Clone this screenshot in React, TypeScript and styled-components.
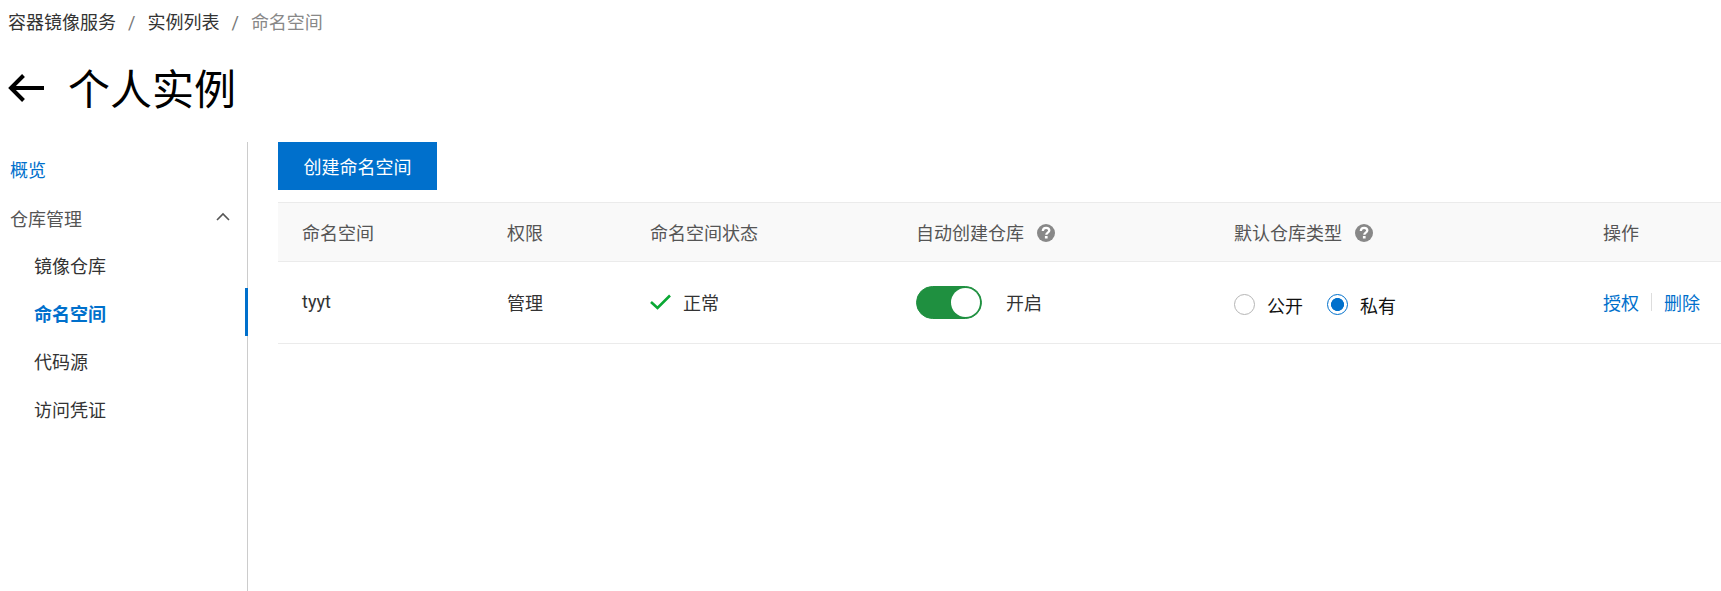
import React from "react";
import styled, {createGlobalStyle} from 'styled-components'

const GlobalStyle = createGlobalStyle`
    html, body {
        margin: 0;
        padding: 0;
        background: #fff;
        font-family: "Roboto", "Noto Sans CJK SC", sans-serif;
        font-size: 18px;
        color: #333;
    }
`;

const columns = "205px 143px 266px 318px 369px 142px";

const HelpIcon = () => <Help viewBox="0 0 18 18" aria-hidden="true">
    <circle cx="9" cy="9" r="9" fill="#888" />
    <path d="M5.8 7C5.9 4.9 7.3 3.8 9.1 3.8C11 3.8 12.3 5 12.3 6.5C12.3 8.7 9.3 8.6 9.3 10.8" fill="none" stroke="#fff" strokeWidth="2.3" />
    <rect x="7.9" y="12" width="2.7" height="2.5" fill="#fff" />
</Help>

export default function App() {
    return <Page>
        <GlobalStyle />
        <Breadcrumb>
            <span>容器镜像服务</span>
            <Slash>/</Slash>
            <span>实例列表</span>
            <Slash>/</Slash>
            <Current>命名空间</Current>
        </Breadcrumb>
        <TitleRow>
            <BackArrow width="36" height="30" viewBox="0 0 36 30" aria-hidden="true">
                <path d="M36 15H3M15.5 2.5L3 15L15.5 27.5" fill="none" stroke="#000" strokeWidth="4" />
            </BackArrow>
            <Title>个人实例</Title>
        </TitleRow>
        <Main>
            <Sidebar>
                <TopItem $active>概览</TopItem>
                <GroupItem>
                    仓库管理
                    <svg width="14" height="9" viewBox="0 0 14 9" aria-hidden="true">
                        <path d="M1 8L7 2L13 8" fill="none" stroke="#555" strokeWidth="1.6" />
                    </svg>
                </GroupItem>
                <SubItem>镜像仓库</SubItem>
                <SubItem $active>命名空间</SubItem>
                <SubItem>代码源</SubItem>
                <SubItem>访问凭证</SubItem>
            </Sidebar>
            <Content>
                <PrimaryButton>创建命名空间</PrimaryButton>
                <HeaderRow>
                    <Cell>命名空间</Cell>
                    <Cell>权限</Cell>
                    <Cell>命名空间状态</Cell>
                    <Cell>自动创建仓库<HelpIcon /></Cell>
                    <Cell>默认仓库类型<HelpIcon /></Cell>
                    <Cell>操作</Cell>
                </HeaderRow>
                <BodyRow>
                    <BodyCell>tyyt</BodyCell>
                    <BodyCell>管理</BodyCell>
                    <BodyCell>
                        <svg width="21" height="16" viewBox="0 0 21 16" aria-hidden="true">
                            <path d="M1 8L7.5 14L20 1.5" fill="none" stroke="#0aa834" strokeWidth="2.6" />
                        </svg>
                        <StatusText>正常</StatusText>
                    </BodyCell>
                    <BodyCell>
                        <Switch><Knob /></Switch>
                        <SwitchLabel>开启</SwitchLabel>
                    </BodyCell>
                    <BodyCell>
                        <Radio />
                        <RadioLabel>公开</RadioLabel>
                        <Radio $checked />
                        <RadioLabel>私有</RadioLabel>
                    </BodyCell>
                    <BodyCell>
                        <Action>授权</Action>
                        <Divider />
                        <Action>删除</Action>
                    </BodyCell>
                </BodyRow>
            </Content>
        </Main>
    </Page>
}

const Page = styled.div`
    width: 1721px;
    height: 591px;
    overflow: hidden;
`;

const Breadcrumb = styled.div`
    display: flex;
    align-items: center;
    height: 24px;
    padding: 11px 0 0 8px;
    line-height: 24px;
`;

const Slash = styled.span`
    margin: 0 12px;
    color: #777;
`;

const Current = styled.span`
    color: #888;
`;

const TitleRow = styled.div`
    display: flex;
    align-items: center;
    height: 54px;
    margin-top: 29px;
    padding-left: 8px;
`;

const BackArrow = styled.svg`
    margin-bottom: 6px;
`;

const Title = styled.h1`
    margin: 0 0 0 24px;
    font-size: 42px;
    font-weight: 400;
    line-height: 54px;
    color: #000;
`;

const Main = styled.div`
    display: flex;
    height: 449px;
    margin-top: 24px;
`;

const Sidebar = styled.nav`
    box-sizing: border-box;
    width: 248px;
    flex-shrink: 0;
    padding-top: 2px;
    border-right: 1px solid #ccc;
`;

const TopItem = styled.div<{$active?: boolean}>`
    height: 48px;
    line-height: 54px;
    padding-left: 10px;
    color: ${p => p.$active ? '#0070cc' : '#555'};
`;

const GroupItem = styled.div`
    display: flex;
    align-items: center;
    justify-content: space-between;
    box-sizing: border-box;
    height: 48px;
    padding: 4px 17px 0 10px;
    color: #555;

    svg {
        margin-top: -4px;
    }
`;

const SubItem = styled.div<{$active?: boolean}>`
    position: relative;
    height: 48px;
    line-height: 54px;
    padding-left: 34px;
    color: ${p => p.$active ? '#0070cc' : '#333'};
    font-weight: ${p => p.$active ? 700 : 400};

    ${p => p.$active && `
        &::after {
            content: "";
            position: absolute;
            right: -1px;
            top: 0;
            width: 3px;
            height: 48px;
            background: #0070cc;
        }
    `}
`;

const Content = styled.div`
    flex: 1;
    min-width: 0;
    padding-left: 30px;
`;

const PrimaryButton = styled.button`
    display: block;
    width: 159px;
    height: 48px;
    padding: 0;
    border: 0;
    background: #0070cc;
    color: #fff;
    font: inherit;
`;

const HeaderRow = styled.div`
    display: grid;
    grid-template-columns: ${columns};
    box-sizing: border-box;
    height: 60px;
    margin-top: 12px;
    background: #f9f9f9;
    border-top: 1px solid #ebebeb;
    border-bottom: 1px solid #ebebeb;
    color: #555;
`;

const BodyRow = styled.div`
    display: grid;
    grid-template-columns: ${columns};
    box-sizing: border-box;
    height: 82px;
    border-bottom: 1px solid #ebebeb;
`;

const Cell = styled.div`
    display: flex;
    align-items: center;
    padding-left: 24px;
    white-space: nowrap;
`;

const BodyCell = styled(Cell)`
    padding-bottom: 2px;
`;

const Help = styled.svg`
    width: 18px;
    height: 18px;
    margin: 2px 0 0 13px;
`;

const StatusText = styled.span`
    margin-left: 12px;
`;

const Switch = styled.div`
    box-sizing: border-box;
    display: flex;
    justify-content: flex-end;
    align-items: center;
    width: 66px;
    height: 33px;
    margin-top: 2px;
    padding-right: 1px;
    border: 1px solid #1f9040;
    border-radius: 17px;
    background: #1f9040;
`;

const Knob = styled.div`
    width: 29px;
    height: 29px;
    border-radius: 50%;
    background: #fff;
`;

const SwitchLabel = styled.span`
    margin-left: 24px;
`;

const Radio = styled.span<{$checked?: boolean}>`
    box-sizing: border-box;
    width: 21px;
    height: 21px;
    flex-shrink: 0;
    margin-top: 6px;
    border-radius: 50%;
    border: 1px solid ${p => p.$checked ? '#0070cc' : '#b5b5b5'};
    background: ${p => p.$checked ? 'radial-gradient(circle, #0070cc 0 6.2px, #fff 6.8px)' : '#fff'};
`;

const RadioLabel = styled.span`
    margin: 6px 24px 0 12px;
    color: #111;
`;

const Action = styled.a`
    color: #0070cc;
`;

const Divider = styled.span`
    width: 1px;
    height: 18px;
    margin: 0 12px;
    background: #ddd;
`;
